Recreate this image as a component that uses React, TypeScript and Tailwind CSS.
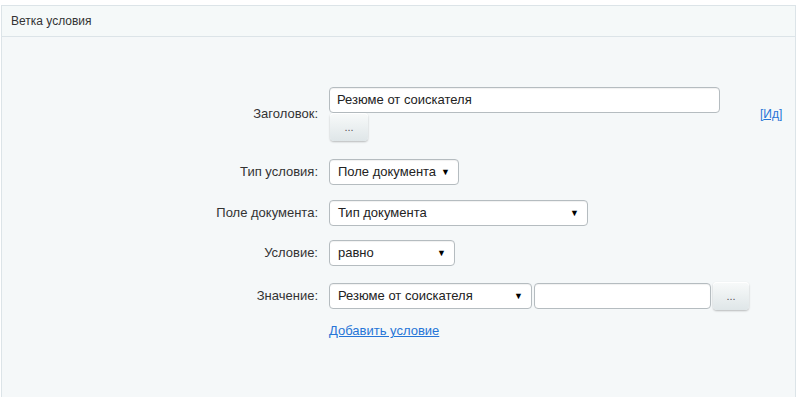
import { Fragment } from "react";

const font = { fontFamily: '"Liberation Sans", Arial, sans-serif' };

function Arrow() {
  return <span className="text-[9px] leading-none text-black">▼</span>;
}

function Select({ value, width }: { value: string; width: string }) {
  return (
    <div
      className={`flex h-[26px] ${width} items-center justify-between rounded-[4px] border border-[#b5bcc0] bg-white pl-[8px] pr-[8px] text-[13px] text-[#222] shadow-[inset_0_1px_1px_rgba(0,0,0,0.06)]`}
    >
      <span>{value}</span>
      <Arrow />
    </div>
  );
}

function DotsButton({ className = "" }: { className?: string }) {
  return (
    <button
      className={`flex items-center justify-center rounded-[4px] bg-gradient-to-b from-[#f8fafa] to-[#dfe6e8] text-[11px] leading-none text-[#555] shadow-[0_1px_2px_rgba(0,0,0,0.25),inset_0_1px_0_#fff] ${className}`}
    >
      ...
    </button>
  );
}

export default function App() {
  const rows = [
    { label: "Тип условия:", node: <Select value="Поле документа" width="w-[130px]" />, mt: "mt-[18px]" },
    { label: "Поле документа:", node: <Select value="Тип документа" width="w-[259px]" />, mt: "mt-[15px]" },
    { label: "Условие:", node: <Select value="равно" width="w-[126px]" />, mt: "mt-[14px]" },
  ];

  return (
    <div className="h-[397px] w-[800px] overflow-hidden bg-white pt-[5px] pl-px pr-[4px]" style={font}>
      <div className="h-[420px] border border-[#dce4e8] bg-[#f5f8f9]">
        <div className="flex h-[31px] items-center border-b border-[#dce4e8] bg-[#f5f9f9] pl-[9px] text-[12px] text-[#333]">
          Ветка условия
        </div>

        <div className="grid grid-cols-[316px_1fr_auto] items-center gap-x-[11px] pt-[50px] pr-[16px]">
          <div className="text-right text-[13px] text-[#333]">Заголовок:</div>
          <div className="flex flex-col items-start">
            <div className="flex h-[26px] w-[391px] items-center rounded-[4px] border border-[#b5bcc0] bg-white pl-[7px] text-[13px] text-[#222] shadow-[inset_0_1px_1px_rgba(0,0,0,0.06)]">
              Резюме от соискателя
            </div>
            <DotsButton className="ml-px h-[28px] w-[38px]" />
          </div>
          <div className="text-[12px] text-[#2675d7]">
            [<span className="underline">Ид</span>]
          </div>

          {rows.map((r) => (
            <Fragment key={r.label}>
              <div className={`text-right text-[13px] text-[#333] ${r.mt}`}>{r.label}</div>
              <div className={r.mt}>{r.node}</div>
              <div className={r.mt} />
            </Fragment>
          ))}

          <div className="mt-[16px] text-right text-[13px] text-[#333]">Значение:</div>
          <div className="mt-[16px] flex items-center gap-[2px]">
            <Select value="Резюме от соискателя" width="w-[203px]" />
            <div className="h-[26px] w-[177px] rounded-[4px] border border-[#b5bcc0] bg-white shadow-[inset_0_1px_1px_rgba(0,0,0,0.06)]" />
            <DotsButton className="h-[28px] w-[36px]" />
          </div>
          <div className="mt-[16px]" />

          <div />
          <div className="mt-[8px]">
            <a className="text-[13px] text-[#2675d7] underline">Добавить условие</a>
          </div>
          <div />
        </div>
      </div>
    </div>
  );
}
